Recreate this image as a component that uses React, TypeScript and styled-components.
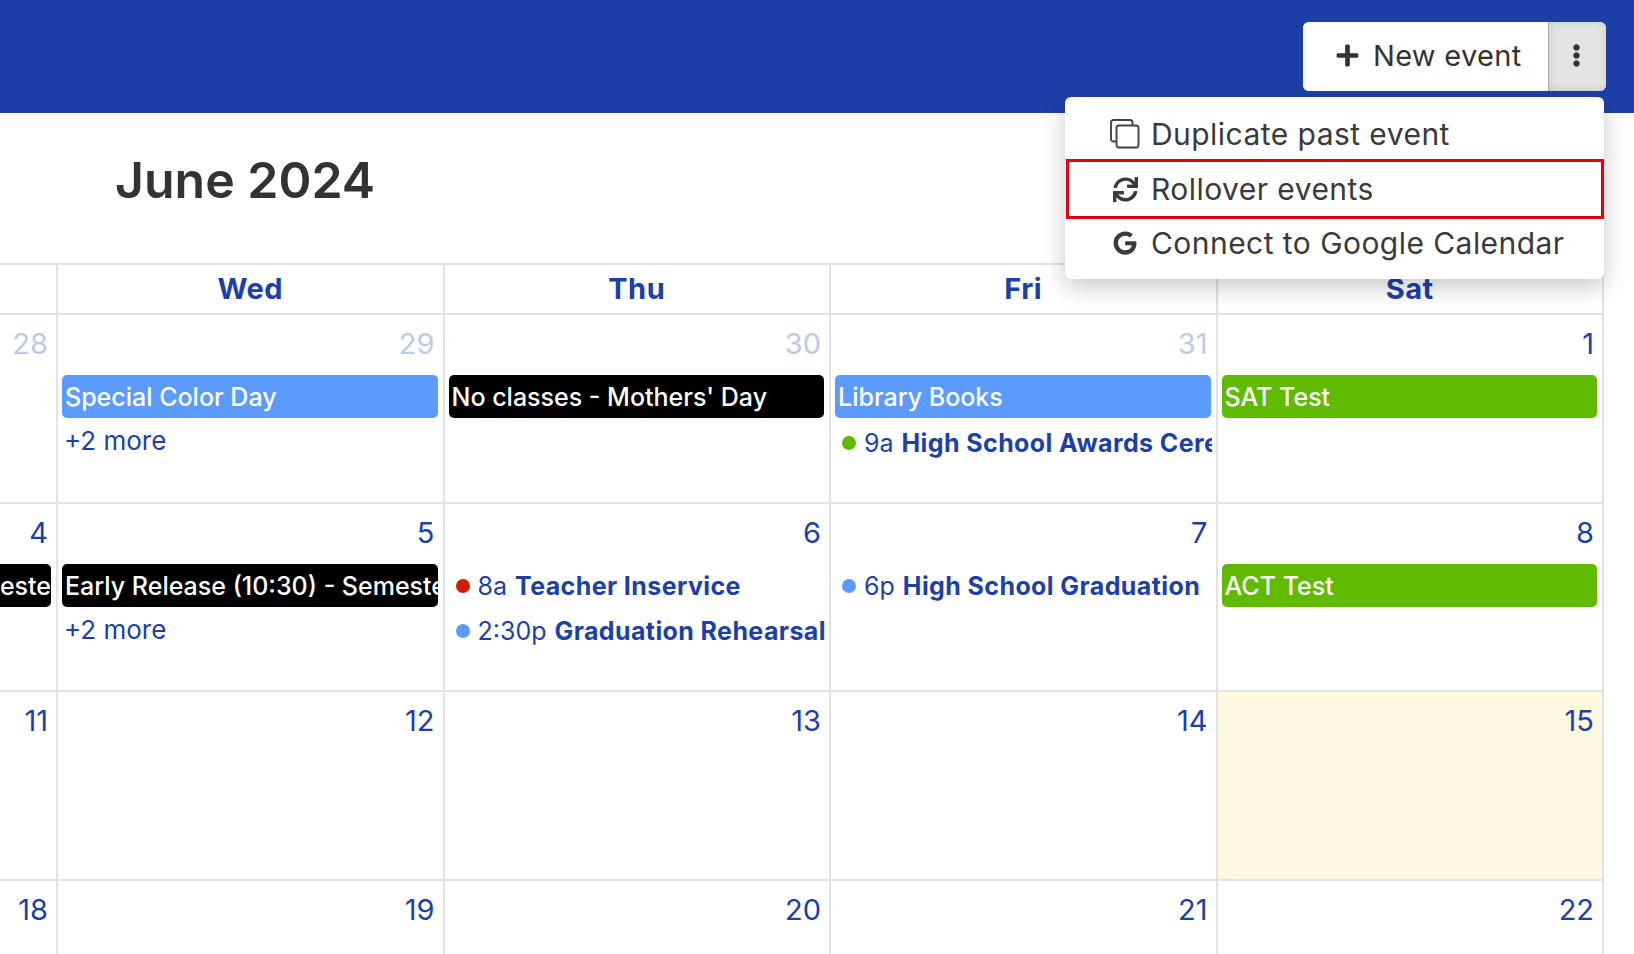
import React from 'react';
import styled, { createGlobalStyle } from 'styled-components';
import { FaEllipsisV, FaGoogle, FaPlus, FaSync } from 'react-icons/fa';

const BLUE = '#1d3fa8';
const LINE = '#e2e2e4';

const GlobalStyle = createGlobalStyle`
  html, body {
    margin: 0;
    padding: 0;
    height: 100%;
    overflow: hidden;
    background: #fff;
    font-family: Inter, "Noto Sans", "Liberation Sans", sans-serif;
  }
`;

const TopBar = styled.header`
  position: relative;
  z-index: 2;
  height: 113px;
  background: ${BLUE};
  display: flex;
  justify-content: flex-end;
  align-items: flex-start;
  padding: 22px 28px 0 0;
  box-sizing: border-box;
`;

const ButtonGroup = styled.div`
  display: flex;
  height: 69px;
  width: 303px;
  border-radius: 6px;
  overflow: hidden;
  background: #fff;
`;

const NewButton = styled.button`
  flex: 1;
  border: 0;
  background: #fff;
  color: #333;
  display: flex;
  align-items: center;
  gap: 13px;
  padding: 0 0 2px 32px;
  font: 400 29px Inter, sans-serif;
  letter-spacing: 0.3px;
`;

const KebabButton = styled.button`
  width: 58px;
  border: 0;
  border-left: 1px solid #aaa;
  background: #e4e4e4;
  box-shadow: inset 0 0 8px rgba(0, 0, 0, 0.12);
  color: #333;
  display: flex;
  align-items: center;
  justify-content: center;
  padding: 0 2px 2px 0;
`;

const Menu = styled.div`
  position: absolute;
  top: 97px;
  right: 30px;
  width: 539px;
  box-sizing: border-box;
  padding: 12px 0;
  background: #fff;
  border-radius: 6px;
  box-shadow: 0 8px 24px rgba(0, 0, 0, 0.22);
`;

const MenuItem = styled.div<{ $marked?: boolean }>`
  height: ${p => (p.$marked ? 60 : 50)}px;
  box-sizing: border-box;
  display: flex;
  align-items: center;
  color: #3a3a3a;
  font-size: 30px;
  letter-spacing: 0.45px;
  ${p => p.$marked && 'border: 3px solid #e2000f; margin: 0 0 0 1px;'}

  &:last-child {
    height: 48px;
  }
`;

const MenuIcon = styled.span<{ $marked?: boolean }>`
  width: ${p => (p.$marked ? 82 : 86)}px;
  padding-left: ${p => (p.$marked ? 30 : 34)}px;
  box-sizing: border-box;
  display: flex;
  justify-content: center;
  flex-shrink: 0;
`;

const TitleRow = styled.div`
  height: 150px;
  box-sizing: border-box;
  padding: 34px 0 0 115px;
`;

const Title = styled.h1`
  margin: 0;
  font-size: 50px;
  line-height: 66px;
  font-weight: 600;
  color: #333;
`;

const Grid = styled.div`
  display: grid;
  grid-template-columns: 56px repeat(4, 386.5px);
  grid-template-rows: 50px repeat(3, 188.6px) 75px;
  width: 1602px;
  box-sizing: content-box;
  border-right: 2px solid ${LINE};
`;

const HeadRow = styled.div`
  grid-column: 1 / -1;
  display: grid;
  grid-template-columns: subgrid;
  border-top: 2px solid ${LINE};
  box-sizing: border-box;
`;

const HeadCell = styled.div<{ $first?: boolean }>`
  border-left: ${p => (p.$first ? '0' : `2px solid ${LINE}`)};
  color: ${BLUE};
  font-size: 29px;
  font-weight: 700;
  letter-spacing: 0.5px;
  text-align: center;
  line-height: 48px;
`;

const Cell = styled.div<{ $first?: boolean; $today?: boolean }>`
  min-width: 0;
  overflow: hidden;
  border-top: 2px solid ${LINE};
  border-left: ${p => (p.$first ? '0' : `2px solid ${LINE}`)};
  background: ${p => (p.$today ? '#fdf9e0' : 'transparent')};
  box-sizing: border-box;
`;

const DayNumber = styled.div<{ $muted?: boolean }>`
  height: 60px;
  padding: 10px 8px 0 0;
  box-sizing: border-box;
  text-align: right;
  font-size: 29px;
  line-height: 38px;
  color: ${p => (p.$muted ? '#bccae9' : BLUE)};
`;

const Bar = styled.div<{ $color: string; $clipLeft?: boolean }>`
  height: 43px;
  margin: 0 5px 2px ${p => (p.$clipLeft ? '-8px' : '4px')};
  padding: ${p => (p.$clipLeft ? '0' : '0 3px')};
  border-radius: 5px;
  background: ${p => p.$color};
  color: #fff;
  font-size: 25px;
  font-weight: 500;
  line-height: 45px;
  white-space: nowrap;
  overflow: hidden;
  display: flex;
  justify-content: ${p => (p.$clipLeft ? 'flex-end' : 'flex-start')};
`;

const More = styled.div`
  height: 45px;
  padding-left: 6px;
  color: ${BLUE};
  font-size: 26px;
  line-height: 42px;
`;

const TimedEvent = styled.div`
  height: 45px;
  display: flex;
  align-items: center;
  margin-right: 4px;
  padding-left: 11px;
  overflow: hidden;
  color: ${BLUE};
  font-size: 25px;
  white-space: nowrap;
`;

const Dot = styled.span<{ $color: string }>`
  width: 14px;
  height: 14px;
  border-radius: 50%;
  background: ${p => p.$color};
  flex-shrink: 0;
  margin-right: 8px;
`;

const EventName = styled.strong`
  font-weight: 700;
  margin-left: 8px;
  letter-spacing: 0.4px;
`;

type CalEvent =
  | { kind: 'bar'; title: string; color: string }
  | { kind: 'timed'; time: string; title: string; color: string }
  | { kind: 'more'; count: number };

interface Day {
  n: number;
  muted?: boolean;
  today?: boolean;
  events?: CalEvent[];
}

const SKY = '#5b9bff';
const GREEN = '#5fba00';
const RED = '#d01c00';
const EARLY = 'Early Release (10:30) - Semester';

const weeks: Day[][] = [
  [
    { n: 28, muted: true },
    { n: 29, muted: true, events: [{ kind: 'bar', title: 'Special Color Day', color: SKY }, { kind: 'more', count: 2 }] },
    { n: 30, muted: true, events: [{ kind: 'bar', title: "No classes - Mothers' Day", color: '#000' }] },
    { n: 31, muted: true, events: [{ kind: 'bar', title: 'Library Books', color: SKY }, { kind: 'timed', time: '9a', title: 'High School Awards Ceremony', color: GREEN }] },
    { n: 1, events: [{ kind: 'bar', title: 'SAT Test', color: GREEN }] }
  ],
  [
    { n: 4, events: [{ kind: 'bar', title: 'Semeste', color: '#000' }] },
    { n: 5, events: [{ kind: 'bar', title: EARLY, color: '#000' }, { kind: 'more', count: 2 }] },
    { n: 6, events: [{ kind: 'timed', time: '8a', title: 'Teacher Inservice', color: RED }, { kind: 'timed', time: '2:30p', title: 'Graduation Rehearsal', color: SKY }] },
    { n: 7, events: [{ kind: 'timed', time: '6p', title: 'High School Graduation', color: SKY }] },
    { n: 8, events: [{ kind: 'bar', title: 'ACT Test', color: GREEN }] }
  ],
  [{ n: 11 }, { n: 12 }, { n: 13 }, { n: 14 }, { n: 15, today: true }],
  [{ n: 18 }, { n: 19 }, { n: 20 }, { n: 21 }, { n: 22 }]
];

const DuplicateIcon = () => (
  <svg width="30" height="30" viewBox="0 0 30 30" fill="none" stroke="#444" strokeWidth="1.9">
    <rect x="6.5" y="6.5" width="22" height="22" rx="2.5" />
    <path d="M22.5 6.5V3.5a2.5 2.5 0 0 0-2.5-2.5H3.5A2.5 2.5 0 0 0 1 3.5V20a2.5 2.5 0 0 0 2.5 2.5h3" />
  </svg>
);

const renderEvent = (ev: CalEvent, i: number, first: boolean) => {
  if (ev.kind === 'bar') {
    return <Bar key={i} $color={ev.color} $clipLeft={first}>{ev.title}</Bar>;
  }
  if (ev.kind === 'more') {
    return <More key={i}>+{ev.count} more</More>;
  }
  return (
    <TimedEvent key={i}>
      <Dot $color={ev.color} />
      {ev.time}
      <EventName>{ev.title}</EventName>
    </TimedEvent>
  );
};

export default function App() {
  return (
    <>
      <GlobalStyle />
      <TopBar>
        <ButtonGroup>
          <NewButton>
            <FaPlus size={25} />
            New event
          </NewButton>
          <KebabButton>
            <FaEllipsisV size={23} />
          </KebabButton>
        </ButtonGroup>
        <Menu>
          <MenuItem>
            <MenuIcon><DuplicateIcon /></MenuIcon>
            Duplicate past event
          </MenuItem>
          <MenuItem $marked>
            <MenuIcon $marked><FaSync size={25} color="#3a3a3a" /></MenuIcon>
            Rollover events
          </MenuItem>
          <MenuItem>
            <MenuIcon><FaGoogle size={24} color="#3a3a3a" /></MenuIcon>
            Connect to Google Calendar
          </MenuItem>
        </Menu>
      </TopBar>
      <TitleRow>
        <Title>June 2024</Title>
      </TitleRow>
      <Grid>
        <HeadRow>
          <HeadCell $first />
          {['Wed', 'Thu', 'Fri', 'Sat'].map(d => <HeadCell key={d}>{d}</HeadCell>)}
        </HeadRow>
        {weeks.map(week => week.map((day, col) => (
          <Cell key={day.n} $first={col === 0} $today={day.today}>
            <DayNumber $muted={day.muted}>{day.n}</DayNumber>
            {day.events?.map((ev, i) => renderEvent(ev, i, col === 0))}
          </Cell>
        )))}
      </Grid>
    </>
  );
}
